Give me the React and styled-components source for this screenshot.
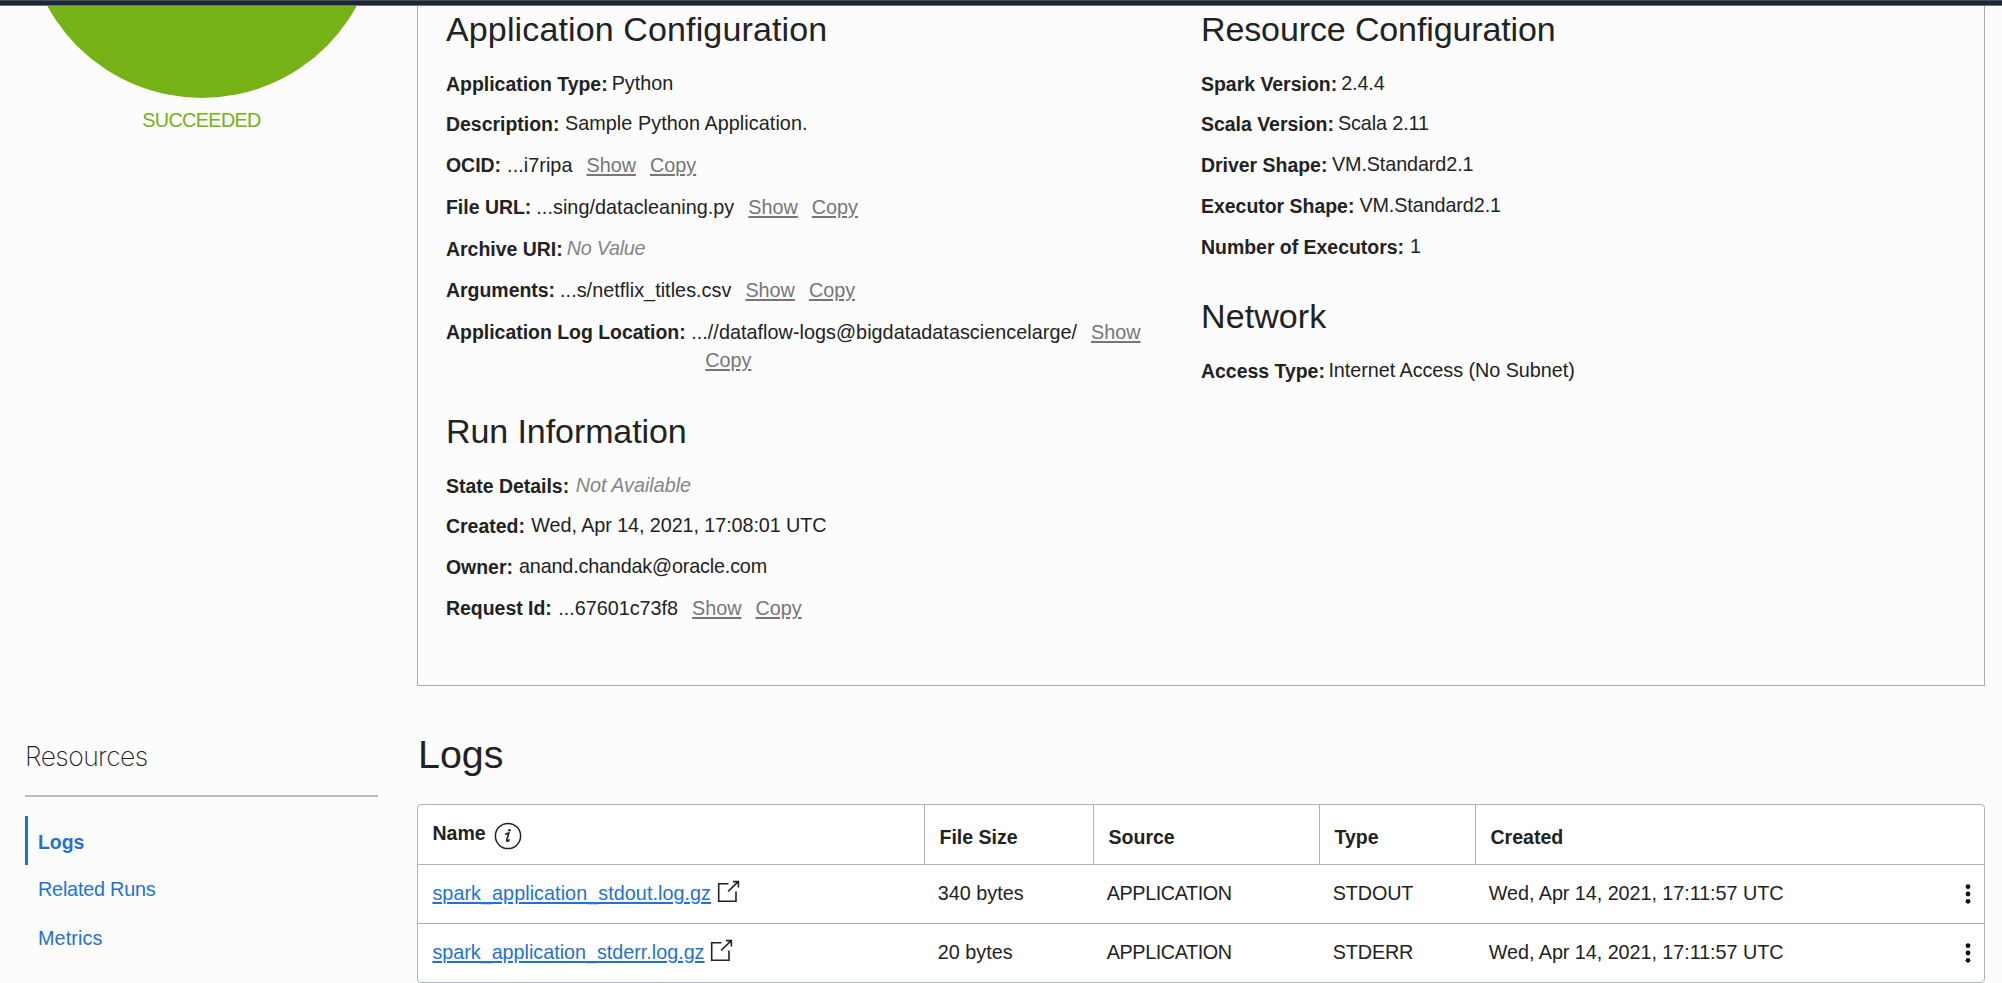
import React from "react";
import styled, { createGlobalStyle } from "styled-components";

const GlobalStyle = createGlobalStyle`
  * { box-sizing: border-box; }
  body {
    margin: 0;
    background: #fcfcfc;
    color: #222;
    font-family: "Liberation Sans", Arial, sans-serif;
    font-size: 19.8px;
    overflow: hidden;
  }
`;

const Page = styled.div`
  width: 2002px;
  height: 983px;
  overflow: hidden;
`;

const TopBar = styled.div`
  height: 6px;
  border-top: 1px solid #42505c;
  border-bottom: 1px solid #6f7180;
  background: #1d2733;
`;

const Columns = styled.div`
  display: grid;
  grid-template-columns: 417px 1568px;
  height: 977px;
`;

const Sidebar = styled.aside`
  display: flex;
  flex-direction: column;
`;

const StatusPane = styled.div`
  height: 680px;
  display: flex;
  flex-direction: column;
  align-items: center;
  padding-right: 14px;
`;

const CircleClip = styled.div`
  width: 352px;
  height: 92px;
  overflow: hidden;
  display: flex;
  align-items: flex-end;
`;

const StatusCircle = styled.div`
  flex: none;
  width: 352px;
  height: 352px;
  border-radius: 50%;
  background: #76b216;
`;

const StatusText = styled.div`
  margin-top: 10px;
  line-height: 24px;
  color: #76b216;
  letter-spacing: -0.63px;
`;

const Resources = styled.nav`
  margin: 52px 39px 0 25px;
`;

const ResourcesTitle = styled.h2`
  margin: 0 0 19px;
  height: 59px;
  padding: 2px 0 0;
  border-bottom: 2px solid #b8c0c7;
  font: 200 26.5px/32px Inter, sans-serif;
  letter-spacing: -0.57px;
`;

const NavItem = styled.a`
  display: block;
  height: 49px;
  padding-left: 10px;
  border-left: 3px solid ${(p) => (p.$active ? "#2372cf" : "transparent")};
  color: #2372cf;
  font-weight: ${(p) => (p.$active ? 700 : 400)};
  font-size: ${(p) => (p.$active ? 19.4 : 19.8)}px;
  line-height: ${(p) => (p.$active ? 52 : 48)}px;
  letter-spacing: ${(p) => p.$track || 0}px;
`;

const Main = styled.main`
  display: flex;
  flex-direction: column;
`;

const DetailsPanel = styled.section`
  height: 680px;
  display: grid;
  grid-template-columns: 755px 1fr;
  border: 1px solid #a9abad;
  border-top: 0;
  padding-left: 28px;
`;

const Heading = styled.h2`
  margin: ${(p) => p.$top || 0}px 0 0;
  height: 64px;
  font-weight: 400;
  font-size: 34px;
  line-height: 46px;
  letter-spacing: ${(p) => p.$track || 0}px;
`;

const Field = styled.div`
  height: ${(p) => p.$pitch}px;
  display: flex;
  align-items: flex-start;
  white-space: nowrap;
  line-height: 28px;
`;

const FieldLabel = styled.span`
  font-weight: 700;
  font-size: 19.45px;
  margin-right: ${(p) => p.$gap ?? 5}px;
`;

const FieldValue = styled.span`
  margin-top: ${(p) => (p.$raised ? -1 : 0)}px;
  color: ${(p) => (p.$empty ? "#858585" : "inherit")};
  font-style: ${(p) => (p.$empty ? "italic" : "normal")};
  letter-spacing: ${(p) => p.$track || 0}px;
`;

const Action = styled.a`
  margin-left: 14px;
  color: #767676;
  text-decoration: underline;
  text-decoration-thickness: 1.5px;
  text-underline-offset: 2px;
`;

const Wrapping = styled.div`
  width: 462px;
  display: flex;
  flex-wrap: wrap;
`;

const LogsTitle = styled.h1`
  margin: 44px 0 0 1px;
  height: 74px;
  font-weight: 400;
  font-size: 39.4px;
  line-height: 48px;
`;

const Table = styled.div`
  height: 179px;
  border: 1px solid #adb5bc;
  border-radius: 4px;
  background: #fff;
  overflow: hidden;
`;

const TableRow = styled.div`
  display: grid;
  grid-template-columns: 506px 169px 226px 156px 1fr;
  height: ${(p) => (p.$head ? 60 : 59)}px;
  border-bottom: ${(p) => (p.$last ? 0 : "1px solid #adb5bc")};
`;

const HeadCell = styled.div`
  display: flex;
  align-items: flex-start;
  gap: 8px;
  padding: ${(p) => (p.$first ? 17 : 21)}px 0 0 14.5px;
  border-left: ${(p) => (p.$first ? 0 : "1px solid #adb5bc")};
  font-weight: 700;
  font-size: 19.55px;
  line-height: 22px;
`;

const Cell = styled.div`
  display: flex;
  align-items: flex-start;
  padding: 16px 13px 0 ${(p) => (p.$first ? 14.4 : 13.8)}px;
  line-height: 24px;
  letter-spacing: ${(p) => p.$track || 0}px;
`;

const FileLink = styled.a`
  color: #2372cf;
  text-decoration: underline;
  text-underline-offset: 2px;
  text-decoration-thickness: 1.5px;
  letter-spacing: ${(p) => p.$track || 0}px;
`;

const Icon = styled.svg`
  flex: none;
  display: block;
  margin: ${(p) => p.$margin || 0};
`;

const InfoIcon = () => (
  <Icon width="28" height="28" viewBox="0 0 28 28" fill="none" stroke="#222">
    <circle cx="14" cy="14" r="12.6" strokeWidth="1.5" />
    <path
      d="M11.2 12.6 Q12.8 11.2 14.8 11 L12.9 17.6 Q12.4 19.6 13.6 19.2 Q14.8 18.6 15.6 17.4"
      strokeWidth="1.7"
    />
    <circle cx="15.4" cy="8.2" r="1.3" fill="#222" stroke="none" />
  </Icon>
);

const ExternalIcon = () => (
  <Icon
    width="24"
    height="24"
    viewBox="0 0 24 24"
    fill="none"
    stroke="#222"
    strokeWidth="1.6"
    $margin="-1px 0 0 5.5px"
  >
    <path d="M11.5 3.7 H1.7 V21.2 H19 V11.5" />
    <path d="M11 11.5 L21.3 1.7 M16 1.6 H21.4 V7.4" />
  </Icon>
);

const KebabIcon = () => (
  <Icon width="6" height="22" viewBox="0 0 6 22" fill="#111" $margin="2px 0 0 auto">
    <circle cx="3" cy="3.7" r="2.4" />
    <circle cx="3" cy="11" r="2.4" />
    <circle cx="3" cy="18.3" r="2.4" />
  </Icon>
);

const application = [
  { label: "Application Type:", value: "Python", pitch: 40, gap: 4 },
  { label: "Description:", value: "Sample Python Application.", pitch: 41, track: 0.07, gap: 5.5 },
  { label: "OCID:", value: "...i7ripa", pitch: 42, actions: true, track: 0.06, gap: 6 },
  { label: "File URL:", value: "...sing/datacleaning.py", pitch: 42, actions: true, track: 0.05 },
  { label: "Archive URI:", value: "No Value", pitch: 41, empty: true, track: -0.25, gap: 4 },
  { label: "Arguments:", value: "...s/netflix_titles.csv", pitch: 42, actions: true, track: 0.04 },
];

const run = [
  { label: "State Details:", value: "Not Available", pitch: 40, empty: true, gap: 6.5 },
  { label: "Created:", value: "Wed, Apr 14, 2021, 17:08:01 UTC", pitch: 41, track: -0.08, gap: 6.5 },
  { label: "Owner:", value: "anand.chandak@oracle.com", pitch: 41, track: -0.17, gap: 6 },
  { label: "Request Id:", value: "...67601c73f8", pitch: 41, actions: true, gap: 6.3 },
];

const resource = [
  { label: "Spark Version:", value: "2.4.4", pitch: 40, track: -0.1, gap: 4 },
  { label: "Scala Version:", value: "Scala 2.11", pitch: 41, track: -0.1, gap: 4 },
  { label: "Driver Shape:", value: "VM.Standard2.1", pitch: 41, track: -0.1, gap: 4.5 },
  { label: "Executor Shape:", value: "VM.Standard2.1", pitch: 41, track: -0.1 },
  { label: "Number of Executors:", value: "1", pitch: 40, gap: 6 },
];

const network = [
  {
    label: "Access Type:",
    value: "Internet Access (No Subnet)",
    pitch: 41,
    track: -0.04,
    gap: 3.5,
  },
];

const logs = [
  { name: "spark_application_stdout.log.gz", size: "340 bytes", type: "STDOUT", track: 0.05 },
  { name: "spark_application_stderr.log.gz", size: "20 bytes", type: "STDERR", track: -0.02 },
];

const Fields = ({ items }) =>
  items.map((f) => (
    <Field key={f.label} $pitch={f.pitch}>
      <FieldLabel $gap={f.gap}>{f.label}</FieldLabel>
      <FieldValue $raised={!f.actions} $empty={f.empty} $track={f.track}>
        {f.value}
      </FieldValue>
      {f.actions && (
        <>
          <Action>Show</Action>
          <Action>Copy</Action>
        </>
      )}
    </Field>
  ));

export default function App() {
  return (
    <Page>
      <GlobalStyle />
      <TopBar />
      <Columns>
        <Sidebar>
          <StatusPane>
            <CircleClip>
              <StatusCircle />
            </CircleClip>
            <StatusText>SUCCEEDED</StatusText>
          </StatusPane>
          <Resources>
            <ResourcesTitle>Resources</ResourcesTitle>
            <NavItem $active>Logs</NavItem>
            <NavItem $track={-0.2}>Related Runs</NavItem>
            <NavItem $track={0.1}>Metrics</NavItem>
          </Resources>
        </Sidebar>
        <Main>
          <DetailsPanel>
            <div>
              <Heading $track={0.13}>Application Configuration</Heading>
              <Fields items={application} />
              <Field $pitch={90}>
                <FieldLabel $gap={5.5}>Application Log Location:</FieldLabel>
                <Wrapping>
                  <FieldValue $track={0.04}>...//dataflow-logs@bigdatadatasciencelarge/</FieldValue>
                  <Action>Show</Action>
                  <Action>Copy</Action>
                </Wrapping>
              </Field>
              <Heading $track={-0.08}>Run Information</Heading>
              <Fields items={run} />
            </div>
            <div>
              <Heading $track={-0.12}>Resource Configuration</Heading>
              <Fields items={resource} />
              <Heading $top={20} $track={0.1}>
                Network
              </Heading>
              <Fields items={network} />
            </div>
          </DetailsPanel>
          <LogsTitle>Logs</LogsTitle>
          <Table>
            <TableRow $head>
              <HeadCell $first>
                Name <InfoIcon />
              </HeadCell>
              <HeadCell>File Size</HeadCell>
              <HeadCell>Source</HeadCell>
              <HeadCell>Type</HeadCell>
              <HeadCell>Created</HeadCell>
            </TableRow>
            {logs.map((l, i) => (
              <TableRow key={l.name} $last={i === logs.length - 1}>
                <Cell $first>
                  <FileLink $track={l.track}>{l.name}</FileLink>
                  <ExternalIcon />
                </Cell>
                <Cell>{l.size}</Cell>
                <Cell $track={-0.41}>APPLICATION</Cell>
                <Cell $track={-0.15}>{l.type}</Cell>
                <Cell $track={-0.05}>
                  Wed, Apr 14, 2021, 17:11:57 UTC
                  <KebabIcon />
                </Cell>
              </TableRow>
            ))}
          </Table>
        </Main>
      </Columns>
    </Page>
  );
}
